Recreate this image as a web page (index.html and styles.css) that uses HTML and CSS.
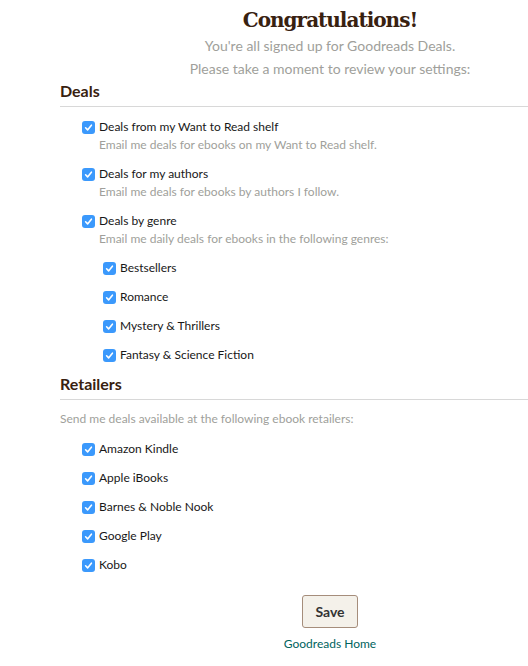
FILE: index.html
```html
<!DOCTYPE html>
<html lang="en">

<head>
    <meta charset="UTF-8">
    <title>Goodreads Deals</title>
    <link rel="stylesheet" href="styles.css">
</head>

<body>
    <div class="page">
        <div class="intro">
            <h1>Congratulations!</h1>
            <p>You're all signed up for Goodreads Deals.</p>
            <p>Please take a moment to review your settings:</p>
        </div>

        <h2 class="section-title">Deals</h2>
        <ul class="options">
            <li class="option">
                <label><span class="check"></span>Deals from my Want to Read shelf</label>
                <p class="hint">Email me deals for ebooks on my Want to Read shelf.</p>
            </li>
            <li class="option">
                <label><span class="check"></span>Deals for my authors</label>
                <p class="hint">Email me deals for ebooks by authors I follow.</p>
            </li>
            <li class="option">
                <label><span class="check"></span>Deals by genre</label>
                <p class="hint">Email me daily deals for ebooks in the following genres:</p>
                <ul class="genres">
                    <li><label><span class="check"></span>Bestsellers</label></li>
                    <li><label><span class="check"></span>Romance</label></li>
                    <li><label><span class="check"></span>Mystery &amp; Thrillers</label></li>
                    <li><label><span class="check"></span>Fantasy &amp; Science Fiction</label></li>
                </ul>
            </li>
        </ul>

        <h2 class="section-title">Retailers</h2>
        <p class="section-hint">Send me deals available at the following ebook retailers:</p>
        <ul class="retailers">
            <li><label><span class="check"></span>Amazon Kindle</label></li>
            <li><label><span class="check"></span>Apple iBooks</label></li>
            <li><label><span class="check"></span>Barnes &amp; Noble Nook</label></li>
            <li><label><span class="check"></span>Google Play</label></li>
            <li><label><span class="check"></span>Kobo</label></li>
        </ul>

        <div class="actions">
            <button class="save-btn">Save</button>
            <a href="javascript:;" class="home-link">Goodreads Home</a>
        </div>
    </div>
</body>

</html>
```

FILE: styles.css
```css
* {
    margin: 0;
    padding: 0;
    box-sizing: border-box;
}

a {
    text-decoration: none;
}

ul li {
    list-style: none;
}

body {
    font-family: Lato, "Open Sans", sans-serif;
    color: #181818;
    background: #fff;
    overflow: hidden;
}

.page {
    width: 540px;
    margin-left: 60px;
}

.intro {
    text-align: center;
    padding-top: 6px;
    margin-bottom: -2px;
}

.intro h1 {
    font-family: "DejaVu Serif", "Liberation Serif", serif;
    font-size: 20px;
    font-weight: bold;
    color: #382110;
    line-height: 28px;
    letter-spacing: -1px;
}

.intro p {
    font-size: 14px;
    line-height: 23px;
    color: #a09f9b;
}

.section-title {
    font-size: 16px;
    font-weight: bold;
    color: #382110;
    line-height: 22px;
    padding-top: 2px;
    padding-bottom: 4px;
    border-bottom: 1px solid #d8d8d8;
    margin-bottom: 11px;
}

.options {
    padding-left: 22px;
}

.option {
    margin-bottom: 11px;
}

.option:last-child {
    margin-bottom: 7px;
}

label {
    display: flex;
    align-items: center;
    gap: 4px;
    font-size: 12px;
    line-height: 18px;
    color: #181818;
}

.check {
    width: 13px;
    height: 13px;
    border-radius: 3px;
    background: #3b99fc url("data:image/svg+xml,%3Csvg xmlns='http://www.w3.org/2000/svg' viewBox='0 0 13 13'%3E%3Cpath d='M3.6 6.8 5.6 8.9 9.4 4.2' fill='none' stroke='white' stroke-width='1.6' stroke-linecap='round' stroke-linejoin='round'/%3E%3C/svg%3E") no-repeat center;
    flex: none;
}

.hint {
    font-size: 12px;
    line-height: 18px;
    color: #a09f9b;
    padding-left: 17px;
}

.genres {
    padding-left: 21px;
    padding-top: 11px;
}

.genres li {
    margin-bottom: 11px;
}

.genres li:last-child {
    margin-bottom: 0;
}

.section-hint {
    font-size: 12px;
    line-height: 18px;
    color: #a09f9b;
    margin-top: -1px;
    margin-bottom: 12px;
}

.retailers {
    padding-left: 22px;
}

.retailers li {
    margin-bottom: 11px;
}

.actions {
    width: 540px;
    display: flex;
    flex-direction: column;
    align-items: center;
    padding-top: 10px;
}

.save-btn {
    font-family: Lato, "Open Sans", sans-serif;
    font-size: 14px;
    font-weight: bold;
    color: #333;
    background: #f4f1ea;
    border: 1px solid #a58d7b;
    border-radius: 3px;
    width: 56px;
    height: 33px;
}

.home-link {
    font-size: 12px;
    line-height: 18px;
    color: #00635d;
    margin-top: 7px;
}
```
